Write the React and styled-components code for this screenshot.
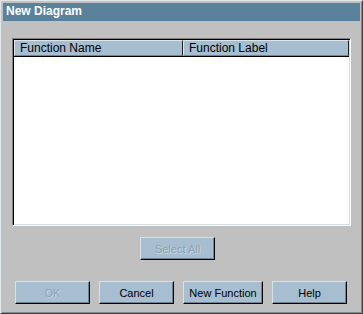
import React from "react";
import styled, { createGlobalStyle } from "styled-components";

const GlobalStyle = createGlobalStyle`
  html, body {
    margin: 0;
    padding: 0;
    background: #c0c0c0;
  }
  * {
    box-sizing: border-box;
  }
`;

const columns = [
  { name: "Function Name", width: 169 },
  { name: "Function Label", width: null },
];

const NewDiagramDialog = () => {
  return (
    <Window>
      <TitleBar>New Diagram</TitleBar>
      <Body>
        <ListBox>
          <HeaderRow>
            {columns.map((col) => (
              <HeaderCell key={col.name} width={col.width}>
                {col.name}
              </HeaderCell>
            ))}
          </HeaderRow>
          <ListArea />
        </ListBox>
        <SelectRow>
          <Button disabled>Select All</Button>
        </SelectRow>
        <ButtonRow>
          <Button disabled>OK</Button>
          <Button>Cancel</Button>
          <Button wide>New Function</Button>
          <Button>Help</Button>
        </ButtonRow>
      </Body>
    </Window>
  );
};

export default function App() {
  return (
    <>
      <GlobalStyle />
      <NewDiagramDialog />
    </>
  );
}

const Window = styled.div`
  width: 363px;
  height: 314px;
  display: flex;
  flex-direction: column;
  background: #c0c0c0;
  border-top: 1px solid #dfe6ea;
  border-left: 1px solid #dfe6ea;
  border-right: 1px solid #404040;
  border-bottom: 1px solid #404040;
  box-shadow: inset 1px 1px 0 #b4c8d4, inset -1px -1px 0 #7f8a92;
  padding: 2px;
  font-family: "Liberation Sans", Arial, sans-serif;
  font-size: 11px;
`;

const TitleBar = styled.div`
  height: 18px;
  flex-shrink: 0;
  background: #5b829b;
  color: #ffffff;
  font-weight: bold;
  font-size: 12px;
  line-height: 17px;
  padding-left: 3px;
`;

const Body = styled.div`
  display: flex;
  flex-direction: column;
  padding: 17px 9px 0 9px;
`;

const ListBox = styled.div`
  height: 188px;
  display: flex;
  flex-direction: column;
  background: #ffffff;
  border-top: 1px solid #808080;
  border-left: 1px solid #808080;
  border-right: 1px solid #ffffff;
  border-bottom: 1px solid #ffffff;
  box-shadow: inset 1px 1px 0 #000000, inset -1px -1px 0 #d4dde2;
  padding: 1px;
`;

const HeaderRow = styled.div`
  display: flex;
  height: 17px;
  flex-shrink: 0;
  background: #a6becf;
  border-bottom: 1px solid #000000;
`;

const HeaderCell = styled.div`
  ${(props) => (props.width ? `width: ${props.width}px;` : "flex: 1;")}
  height: 100%;
  font-size: 12px;
  line-height: 15px;
  padding-left: 5px;
  color: #000000;
  border-top: 1px solid #dbe5ec;
  border-left: 1px solid #dbe5ec;
  border-right: 1px solid #202020;
  border-bottom: 1px solid #6f8595;
  white-space: nowrap;
  overflow: hidden;
`;

const ListArea = styled.div`
  flex: 1;
  background: #ffffff;
`;

const SelectRow = styled.div`
  display: flex;
  justify-content: center;
  margin-top: 11px;
  padding-right: 8px;
`;

const ButtonRow = styled.div`
  display: flex;
  gap: 9px;
  margin-top: 21px;
  padding-left: 3px;
`;

const Button = styled.button`
  width: ${(props) => (props.wide ? "80px" : "75px")};
  height: 23px;
  padding: 0;
  font-family: "Liberation Sans", Arial, sans-serif;
  font-size: 11px;
  color: ${(props) => (props.disabled ? "#8ba3b3" : "#000000")};
  text-shadow: ${(props) => (props.disabled ? "1px 1px 0 #c6d6e0" : "none")};
  background: #a6becf;
  border-top: 1px solid #d6e2ea;
  border-left: 1px solid #d6e2ea;
  border-right: 1px solid #000000;
  border-bottom: 1px solid #000000;
  box-shadow: inset -1px -1px 0 #6f8595;
  border-radius: 0;
  cursor: default;
`;
